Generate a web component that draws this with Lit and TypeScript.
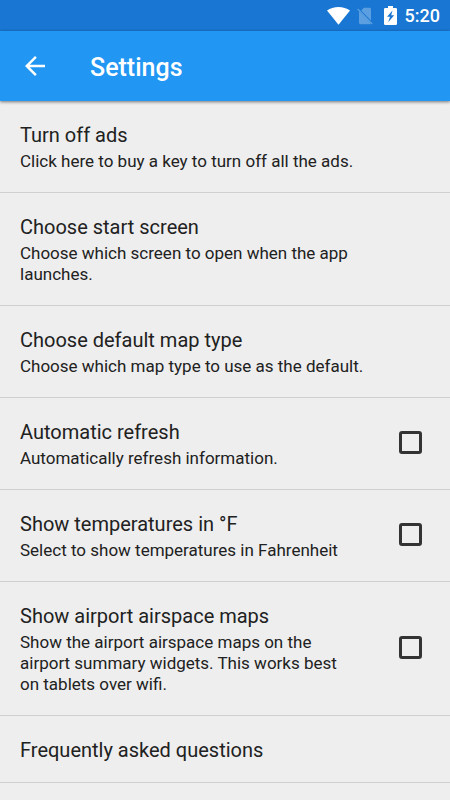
import { LitElement, html, css, nothing } from "lit";
import { customElement, property } from "lit/decorators.js";

interface Setting {
  id: string;
  title: string;
  summary?: string;
  toggle?: boolean;
}

const SETTINGS: Setting[] = [
  { id: "ads", title: "Turn off ads", summary: "Click here to buy a key to turn off all the ads." },
  { id: "start", title: "Choose start screen", summary: "Choose which screen to open when the app launches." },
  { id: "map", title: "Choose default map type", summary: "Choose which map type to use as the default." },
  { id: "refresh", title: "Automatic refresh", summary: "Automatically refresh information.", toggle: true },
  { id: "fahrenheit", title: "Show temperatures in °F", summary: "Select to show temperatures in Fahrenheit", toggle: true },
  {
    id: "airspace",
    title: "Show airport airspace maps",
    summary: "Show the airport airspace maps on the airport summary widgets. This works best on tablets over wifi.",
    toggle: true,
  },
  { id: "faq", title: "Frequently asked questions" },
];

@customElement("status-bar")
export class StatusBar extends LitElement {
  static styles = css`
    :host {
      display: flex;
      align-items: center;
      justify-content: flex-end;
      height: 31px;
      padding-right: 10px;
      background: #1976d2;
      color: #fff;
    }
    svg {
      display: block;
      fill: currentColor;
    }
    .wifi {
      margin-right: 7px;
    }
    .sim {
      margin-right: 11px;
      color: #5c9fe0;
    }
    .battery {
      margin-right: 8px;
    }
    .time {
      font-size: 18px;
      line-height: 20px;
      font-weight: 500;
    }
  `;

  render() {
    return html`
      <svg class="wifi" width="23" height="18" viewBox="0 0 23 18" aria-hidden="true">
        <path d="M11.5 17.8 0 3.6C3.2 1.2 7.2 0 11.5 0S19.8 1.2 23 3.6Z" />
      </svg>
      <svg class="sim" width="16" height="18" viewBox="0 0 16 18" aria-hidden="true">
        <path d="M6.8 .8H12.6Q14 .8 14 2.2V13.5L4.2 3.4Z" />
        <path d="M2 4.2 13.9 16.5Q13.5 17.2 12.6 17.2H3.4Q2 17.2 2 15.8Z" />
        <path d="M1.1 1.6 15.6 16.6 14.7 17.5 .2 2.5Z" />
      </svg>
      <svg class="battery" width="13" height="19" viewBox="0 0 13 19" aria-hidden="true">
        <path
          fill-rule="evenodd"
          d="M4 0H9V2H11.8Q13 2 13 3.2V17.8Q13 19 11.8 19H1.2Q0 19 0 17.8V3.2Q0 2 1.2 2H4ZM8.5 4.5 3 10.8H6L4.2 16.2 10.2 9.3H7.2Z"
        />
      </svg>
      <span class="time">5:20</span>
    `;
  }
}

@customElement("setting-row")
export class SettingRow extends LitElement {
  @property({ attribute: false }) setting!: Setting;

  static styles = css`
    :host {
      display: block;
      border-bottom: 1px solid #d0d0d0;
    }
    .row {
      display: flex;
      align-items: center;
      box-sizing: border-box;
      width: 100%;
      margin: 0;
      padding: 22px 20px 20px;
      border: 0;
      background: none;
      color: #212121;
      font: inherit;
      text-align: left;
      cursor: pointer;
    }
    .text {
      flex: 1;
      min-width: 0;
      padding-right: 20px;
    }
    .title,
    .summary {
      display: block;
    }
    .title {
      font-size: 20px;
      line-height: 24px;
    }
    .summary {
      margin-top: 4px;
      font-size: 17px;
      line-height: 21px;
    }
    .check {
      appearance: none;
      box-sizing: border-box;
      flex: none;
      width: 23px;
      height: 23px;
      margin: 0 8px 4px 20px;
      border: 3px solid #333;
      border-radius: 3px;
    }
    .check:checked {
      background: #2196f3;
    }
  `;

  render() {
    const { id, title, summary, toggle } = this.setting;
    const text = html`
      <span class="text">
        <span class="title">${title}</span>
        ${summary ? html`<span class="summary">${summary}</span>` : nothing}
      </span>
    `;
    return toggle
      ? html`<label class="row" for=${id}>${text}<input class="check" type="checkbox" id=${id} /></label>`
      : html`<button class="row" type="button">${text}</button>`;
  }
}

@customElement("app-root")
export class AppRoot extends LitElement {
  static styles = css`
    :host {
      display: block;
      min-height: 100vh;
      background: #eee;
      font-family: Roboto, sans-serif;
    }
    .viewport {
      display: flex;
      flex-direction: column;
      height: 100vh;
    }
    .bar {
      display: flex;
      flex: none;
      align-items: center;
      height: 70px;
      background: #2196f3;
      color: #fff;
      box-shadow: 0 1px 3px rgba(0, 0, 0, 0.5);
      z-index: 1;
    }
    .back {
      display: grid;
      place-items: center;
      width: 70px;
      height: 70px;
      padding: 0;
      border: 0;
      background: none;
      color: inherit;
      cursor: pointer;
    }
    .back svg {
      display: block;
      fill: currentColor;
    }
    .heading {
      margin: 0;
      padding: 4px 0 0 20px;
      font-size: 25px;
      line-height: 30px;
      font-weight: 500;
    }
    .list {
      flex: 1;
      min-height: 0;
      overflow-y: auto;
      scrollbar-width: none;
    }
  `;

  render() {
    return html`
      <div class="viewport">
        <status-bar></status-bar>
        <header class="bar">
          <button class="back" type="button" aria-label="Navigate up">
            <svg width="30" height="30" viewBox="0 0 24 24" aria-hidden="true">
              <path d="M20 11H7.83l5.59-5.59L12 4l-8 8 8 8 1.41-1.41L7.83 13H20v-2z" />
            </svg>
          </button>
          <h1 class="heading">Settings</h1>
        </header>
        <main class="list">
          ${SETTINGS.map((s) => html`<setting-row .setting=${s}></setting-row>`)}
        </main>
      </div>
    `;
  }
}
